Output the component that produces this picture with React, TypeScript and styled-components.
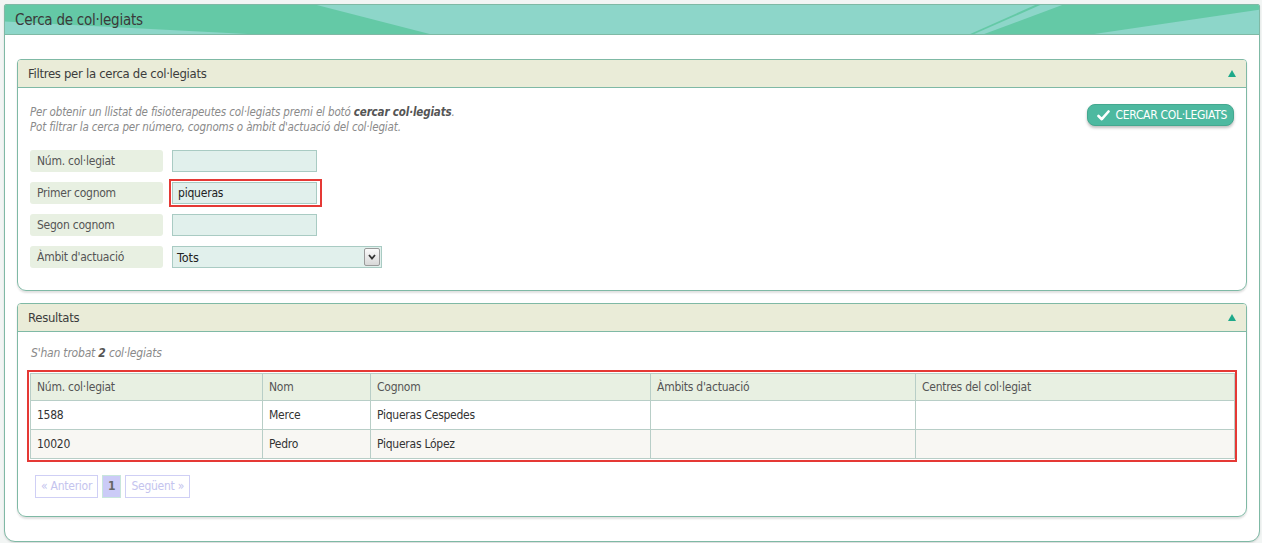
import styled, { createGlobalStyle } from 'styled-components';

const GlobalStyle = createGlobalStyle`
	html, body {
		margin: 0;
		padding: 0;
		background: #f2f5f4;
	}
	body {
		font-family: "DejaVu Sans Condensed", "Liberation Sans Narrow", "Liberation Sans", sans-serif;
		font-stretch: condensed;
		color: #444;
	}
	* {
		box-sizing: border-box;
	}
`;

const rows = [
	{ num: '1588', nom: 'Merce', cognom: 'Piqueras Cespedes' },
	{ num: '10020', nom: 'Pedro', cognom: 'Piqueras López' },
];

const columns = [
	{ title: 'Núm. col·legiat', width: 232 },
	{ title: 'Nom', width: 108 },
	{ title: 'Cognom', width: 280 },
	{ title: "Àmbits d'actuació", width: 265 },
	{ title: 'Centres del col·legiat', width: 319 },
];

function BandArt() {
	return (
		<BandSvg viewBox="0 0 1255 30" preserveAspectRatio="none">
			<rect x="0" y="0" width="1255" height="30" fill="#8dd6c9" />
			<polygon points="0,0 312,0 425,30 243,30 0,17" fill="#64c9a6" />
			<polygon points="966,30 970,30 1036,0 1031,0" fill="#64c9a6" />
			<polygon points="980,30 1058,0 1255,0 1255,5 1090,30" fill="#64c9a6" />
		</BandSvg>
	);
}

function Triangle() {
	return (
		<svg width="8" height="7" viewBox="0 0 8 7">
			<polygon points="4,0 8,7 0,7" fill="#1ea98a" />
		</svg>
	);
}

export default function App() {
	return (
		<>
			<GlobalStyle />
			<Page>
				<Outer>
					<Band>
						<BandArt />
						<BandTitle>Cerca de col·legiats</BandTitle>
					</Band>
					<OuterBody>
						<Panel>
							<PanelHeader>
								<PanelTitle>Filtres per la cerca de col·legiats</PanelTitle>
								<Triangle />
							</PanelHeader>
							<FilterBody>
								<IntroRow>
									<Intro>
										Per obtenir un llistat de fisioterapeutes col·legiats premi el botó{' '}
										<b>cercar col·legiats</b>.
										<br />
										Pot filtrar la cerca per número, cognoms o àmbit d'actuació del col·legiat.
									</Intro>
									<SearchButton>
										<svg width="13" height="11" viewBox="0 0 13 11">
											<path d="M1.5 6 L4.8 9.2 L11.5 1.5" fill="none" stroke="#fff" strokeWidth="2.6" strokeLinecap="round" strokeLinejoin="round" />
										</svg>
										CERCAR COL·LEGIATS
									</SearchButton>
								</IntroRow>
								<Form>
									<FormRow>
										<Label>Núm. col·legiat</Label>
										<TextInput defaultValue="" />
									</FormRow>
									<FormRow>
										<Label>Primer cognom</Label>
										<Highlight>
											<TextInput defaultValue="piqueras" />
										</Highlight>
									</FormRow>
									<FormRow>
										<Label>Segon cognom</Label>
										<TextInput defaultValue="" />
									</FormRow>
									<FormRow>
										<Label>Àmbit d'actuació</Label>
										<SelectBox>
											<SelectValue>Tots</SelectValue>
											<SelectArrow>
												<svg width="8" height="6" viewBox="0 0 8 6">
													<path d="M1 1 L4 4.5 L7 1" fill="none" stroke="#333" strokeWidth="1.8" />
												</svg>
											</SelectArrow>
										</SelectBox>
									</FormRow>
								</Form>
							</FilterBody>
						</Panel>

						<Panel>
							<PanelHeader>
								<PanelTitle>Resultats</PanelTitle>
								<Triangle />
							</PanelHeader>
							<ResultsBody>
								<Found>
									S'han trobat <b>2</b> col·legiats
								</Found>
								<TableFrame>
									<Table>
										<colgroup>
											{columns.map((c) => (
												<col key={c.title} style={{ width: c.width }} />
											))}
										</colgroup>
										<thead>
											<tr>
												{columns.map((c) => (
													<Th key={c.title}>{c.title}</Th>
												))}
											</tr>
										</thead>
										<tbody>
											{rows.map((r, i) => (
												<Tr key={r.num} striped={i % 2 === 1}>
													<Td>{r.num}</Td>
													<Td>{r.nom}</Td>
													<Td>{r.cognom}</Td>
													<Td />
													<Td />
												</Tr>
											))}
										</tbody>
									</Table>
								</TableFrame>
								<Pager>
									<PageLink>« Anterior</PageLink>
									<PageLink current>1</PageLink>
									<PageLink>Següent »</PageLink>
								</Pager>
							</ResultsBody>
						</Panel>
					</OuterBody>
				</Outer>
			</Page>
		</>
	);
}

const Page = styled.div`
	padding: 4px 3px 2px 4px;
`;

const Outer = styled.div`
	width: 1256px;
	background: #fff;
	border: 1px solid #7fb9a5;
	border-radius: 2px 2px 11px 11px;
	box-shadow: 0 1px 2px rgba(0, 0, 0, 0.12);
	overflow: hidden;
`;

const Band = styled.header`
	position: relative;
	height: 30px;
	border-bottom: 1px solid #7fb9a5;
	display: flex;
	align-items: center;
	padding-left: 10px;
`;

const BandSvg = styled.svg`
	position: absolute;
	inset: 0;
	width: 100%;
	height: 100%;
	display: block;
`;

const BandTitle = styled.h1`
	position: relative;
	margin: 0;
	font-size: 15px;
	letter-spacing: -0.25px;
	font-weight: 400;
	color: #3a3a3a;
`;

const OuterBody = styled.div`
	display: flex;
	flex-direction: column;
	gap: 12px;
	padding: 24px 12px 24px 12px;
`;

const Panel = styled.section`
	border: 1px solid #7fb9a5;
	border-radius: 4px 4px 9px 9px;
	box-shadow: 0 2px 2px rgba(0, 0, 0, 0.12);
	overflow: hidden;
`;

const PanelHeader = styled.header`
	height: 28px;
	background: #eaecd8;
	border-bottom: 1px solid #7fb9a5;
	display: flex;
	align-items: center;
	justify-content: space-between;
	padding: 0 10px 0 10px;
`;

const PanelTitle = styled.h2`
	margin: 0;
	font-size: 13px;
	letter-spacing: -0.3px;
	font-weight: 400;
	color: #3c3c3c;
`;

const FilterBody = styled.div`
	padding: 17px 12px 22px 12px;
`;

const IntroRow = styled.div`
	display: flex;
	justify-content: space-between;
	align-items: flex-start;
`;

const Intro = styled.p`
	margin: 0;
	font-size: 11.5px;
	letter-spacing: -0.15px;
	line-height: 15px;
	font-style: italic;
	color: #8a8a8a;
	b {
		color: #555;
	}
`;

const SearchButton = styled.button`
	margin-top: -1px;
	height: 22px;
	display: flex;
	align-items: center;
	gap: 6px;
	padding: 0 6px 0 9px;
	border: 1px solid #44a88f;
	border-radius: 8px;
	background: #4db9a0;
	color: #fff;
	font-family: inherit;
	font-stretch: condensed;
	font-size: 12px;
	letter-spacing: -0.3px;
	box-shadow: 0 2px 3px rgba(0, 0, 0, 0.25);
`;

const Form = styled.div`
	margin-top: 15px;
	display: flex;
	flex-direction: column;
	gap: 10px;
`;

const FormRow = styled.div`
	display: flex;
	align-items: center;
	gap: 9px;
	height: 22px;
`;

const Label = styled.div`
	width: 133px;
	height: 22px;
	line-height: 22px;
	padding-left: 7px;
	background: #e8f0e2;
	border-radius: 3px;
	font-size: 12px;
	letter-spacing: -0.25px;
	color: #555;
`;

const TextInput = styled.input`
	width: 145px;
	height: 22px;
	border: 1px solid #a9cbc3;
	background: #e1f0ec;
	padding: 0 5px;
	font-family: inherit;
	font-stretch: condensed;
	font-size: 12px;
	letter-spacing: -0.2px;
	color: #222;
	outline: none;
`;

const Highlight = styled.span`
	display: flex;
	margin-left: -3px;
	padding: 1px 3px 1px 1px;
	border: 2px solid #e53935;
`;

const SelectBox = styled.div`
	width: 210px;
	height: 22px;
	display: flex;
	align-items: center;
	justify-content: space-between;
	border: 1px solid #a9cbc3;
	background: #e1f0ec;
	padding: 0 1px 0 4px;
`;

const SelectValue = styled.span`
	font-size: 12.5px;
	color: #222;
`;

const SelectArrow = styled.span`
	width: 16px;
	height: 18px;
	display: flex;
	align-items: center;
	justify-content: center;
	border: 1px solid #9a9a9a;
	border-radius: 2px;
	background: linear-gradient(#fafafa, #d8d8d8);
`;

const ResultsBody = styled.div`
	padding: 13px 9px 18px 9px;
`;

const Found = styled.p`
	margin: 0 0 0 4px;
	font-size: 12px;
	letter-spacing: -0.2px;
	line-height: 16px;
	font-style: italic;
	color: #8a8a8a;
	b {
		color: #555;
	}
`;

const TableFrame = styled.div`
	margin-top: 9px;
	border: 2px solid #e53935;
	padding: 1px;
`;

const Table = styled.table`
	width: 100%;
	border-collapse: collapse;
	table-layout: fixed;
	border: 1px solid #b8cec7;
`;

const Th = styled.th`
	height: 27px;
	padding: 0 6px;
	text-align: left;
	font-weight: 400;
	font-size: 12px;
	letter-spacing: -0.25px;
	color: #555;
	background: #e8f0e2;
	border: 1px solid #b8cec7;
`;

const Tr = styled.tr<{ striped: boolean }>`
	background: ${({ striped }) => (striped ? '#f8f7f3' : '#fff')};
`;

const Td = styled.td`
	height: 29px;
	padding: 0 6px;
	font-size: 12px;
	letter-spacing: -0.25px;
	color: #333;
	border: 1px solid #b8cec7;
`;

const Pager = styled.nav`
	margin: 13px 0 0 8px;
	display: flex;
	gap: 4px;
`;

const PageLink = styled.span<{ current?: boolean }>`
	height: 23px;
	line-height: 21px;
	padding: 0 5px;
	border: 1px solid ${({ current }) => (current ? '#c8e6dc' : '#cfcff5')};
	background: ${({ current }) => (current ? '#cbcbf7' : '#fff')};
	color: ${({ current }) => (current ? '#666' : '#c4c4ee')};
	font-size: 12px;
	letter-spacing: -0.25px;
	font-weight: ${({ current }) => (current ? 700 : 400)};
`;
